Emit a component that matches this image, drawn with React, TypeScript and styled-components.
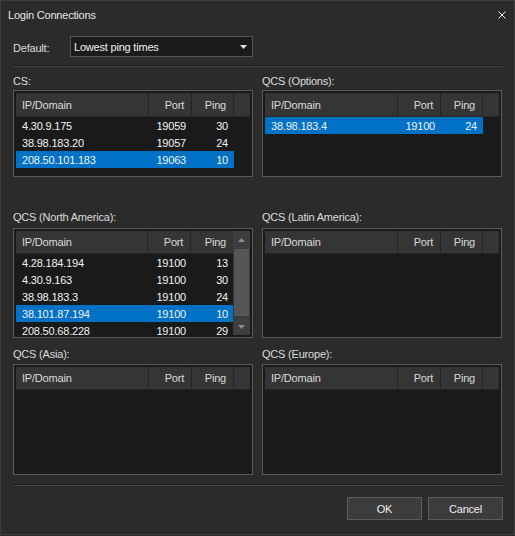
import styled, { createGlobalStyle } from "styled-components";

const GlobalStyle = createGlobalStyle`
  html, body {
    margin: 0;
    padding: 0;
    background: #2b2b2b;
  }
  body {
    font-family: "Liberation Sans", Arial, sans-serif;
    font-size: 11px;
    letter-spacing: -0.2px;
  }
`;

const Window = styled.div`
  box-sizing: border-box;
  width: 515px;
  height: 535px;
  background: #2b2b2b;
  border: 1px solid #3d3d3d;
  display: flex;
  flex-direction: column;
  color: #f0f0f0;
`;

const TitleBar = styled.div`
  height: 27px;
  padding: 0 7px;
  display: flex;
  align-items: center;
  justify-content: space-between;
`;

const Title = styled.span`
  color: #e6e6e6;
  font-size: 11px;
`;

const CloseButton = styled.div`
  width: 8px;
  height: 8px;
  margin-right: 1px;
  display: flex;
`;

const Body = styled.div`
  padding: 0 11px 0 12px;
  display: flex;
  flex-direction: column;
`;

const DefaultRow = styled.div`
  margin-top: 8px;
  height: 21px;
  display: flex;
  align-items: center;
`;

const FieldLabel = styled.span`
  width: 57px;
  color: #dcdcdc;
  padding-top: 3px;
`;

const Dropdown = styled.div`
  box-sizing: border-box;
  width: 183px;
  height: 21px;
  background: #1b1b1b;
  border: 1px solid #555;
  display: flex;
  align-items: center;
  justify-content: space-between;
  padding: 0 5px 0 3px;
  color: #f0f0f0;
`;

const Separator = styled.div<{ $top: number }>`
  margin-top: ${(p) => p.$top}px;
  height: 0;
  border-top: 1px solid #1e1e1e;
  border-bottom: 1px solid #424242;
`;

const Groups = styled.div<{ $top: number }>`
  margin-top: ${(p) => p.$top}px;
  display: grid;
  grid-template-columns: 240px 240px;
  column-gap: 9px;
`;

const Group = styled.div<{ $top: number }>`
  margin-top: ${(p) => p.$top}px;
  display: flex;
  flex-direction: column;
`;

const GroupLabel = styled.div<{ $gap: number }>`
  height: 13px;
  line-height: 13px;
  color: #dcdcdc;
  margin-bottom: ${(p) => p.$gap}px;
`;

const ListBox = styled.div<{ $height: number }>`
  box-sizing: border-box;
  height: ${(p) => p.$height}px;
  border: 1px solid #5a5a5a;
  background: #1a1a1a;
  padding: 2px;
  display: flex;
  overflow: hidden;
`;

const ListMain = styled.div`
  flex: 1;
  display: flex;
  flex-direction: column;
  min-width: 0;
`;

const HeaderRow = styled.div<{ $h: number }>`
  height: ${(p) => p.$h}px;
  display: flex;
  flex-shrink: 0;
  background: #353535;
  border-bottom: 1px solid #262626;
  box-sizing: border-box;
`;

const HeaderCell = styled.div<{ $w?: number; $align?: string }>`
  box-sizing: border-box;
  ${(p) => (p.$w ? `width: ${p.$w}px;` : "flex: 1;")}
  border-right: 1px solid #242424;
  display: flex;
  align-items: center;
  justify-content: ${(p) => (p.$align === "right" ? "flex-end" : "flex-start")};
  padding: ${(p) => (p.$align === "right" ? "0 7px 0 0" : "0 0 0 6px")};
  color: #dadada;
  &:last-child {
    border-right: none;
  }
`;

const Row = styled.div<{ $selected?: boolean }>`
  height: 17px;
  width: 218px;
  display: flex;
  flex-shrink: 0;
  background: ${(p) => (p.$selected ? "#0071c5" : "transparent")};
  color: #f2f2f2;
`;

const Cell = styled.div<{ $w: number; $align?: string }>`
  box-sizing: border-box;
  width: ${(p) => p.$w}px;
  display: flex;
  align-items: center;
  justify-content: ${(p) => (p.$align === "right" ? "flex-end" : "flex-start")};
  padding: ${(p) => (p.$align === "right" ? "0 6px 0 0" : "0 0 0 6px")};
`;

const ScrollBar = styled.div`
  width: 17px;
  flex-shrink: 0;
  background: #3a3a3a;
  display: flex;
  flex-direction: column;
`;

const ScrollArrow = styled.div`
  height: 17px;
  background: #3e3e3e;
  display: flex;
  align-items: center;
  justify-content: center;
`;

const ScrollTrack = styled.div`
  flex: 1;
  padding: 1px 1px;
  display: flex;
  flex-direction: column;
`;

const ScrollThumb = styled.div`
  height: 67px;
  background: #565656;
`;

const ButtonRow = styled.div`
  margin-top: 11px;
  display: flex;
  justify-content: flex-end;
  gap: 6px;
`;

const Button = styled.button`
  box-sizing: border-box;
  width: 75px;
  height: 23px;
  background: #3c3c3c;
  border: 1px solid #5c5c5c;
  color: #f0f0f0;
  font-family: "Liberation Sans", Arial, sans-serif;
  font-size: 11px;
  letter-spacing: -0.2px;
  padding: 0;
`;

type Entry = { ip: string; port: string; ping: string; selected?: boolean };

const Arrow = ({ up, color }: { up?: boolean; color: string }) => (
  <svg width="7" height="4" viewBox="0 0 7 4">
    <polygon points={up ? "0,4 7,4 3.5,0" : "0,0 7,0 3.5,4"} fill={color} />
  </svg>
);

function ConnectionList({
  height,
  rows,
  scroll,
  headerHeight = 23,
}: {
  height: number;
  rows: Entry[];
  scroll?: boolean;
  headerHeight?: number;
}) {
  return (
    <ListBox $height={height}>
      <ListMain>
        <HeaderRow $h={headerHeight}>
          <HeaderCell $w={133}>IP/Domain</HeaderCell>
          <HeaderCell $w={43} $align="right">
            Port
          </HeaderCell>
          <HeaderCell $w={42} $align="right">
            Ping
          </HeaderCell>
          {!scroll && <HeaderCell />}
        </HeaderRow>
        {rows.map((r) => (
          <Row key={r.ip} $selected={r.selected}>
            <Cell $w={133}>{r.ip}</Cell>
            <Cell $w={43} $align="right">
              {r.port}
            </Cell>
            <Cell $w={42} $align="right">
              {r.ping}
            </Cell>
          </Row>
        ))}
      </ListMain>
      {scroll && (
        <ScrollBar>
          <ScrollArrow>
            <Arrow up color="#8c8c8c" />
          </ScrollArrow>
          <ScrollTrack>
            <ScrollThumb />
          </ScrollTrack>
          <ScrollArrow>
            <Arrow color="#8c8c8c" />
          </ScrollArrow>
        </ScrollBar>
      )}
    </ListBox>
  );
}

const cs: Entry[] = [
  { ip: "4.30.9.175", port: "19059", ping: "30" },
  { ip: "38.98.183.20", port: "19057", ping: "24" },
  { ip: "208.50.101.183", port: "19063", ping: "10", selected: true },
];

const options: Entry[] = [{ ip: "38.98.183.4", port: "19100", ping: "24", selected: true }];

const northAmerica: Entry[] = [
  { ip: "4.28.184.194", port: "19100", ping: "13" },
  { ip: "4.30.9.163", port: "19100", ping: "30" },
  { ip: "38.98.183.3", port: "19100", ping: "24" },
  { ip: "38.101.87.194", port: "19100", ping: "10", selected: true },
  { ip: "208.50.68.228", port: "19100", ping: "29" },
];

export default function App() {
  return (
    <>
      <GlobalStyle />
      <Window>
        <TitleBar>
          <Title>Login Connections</Title>
          <CloseButton>
            <svg width="8" height="8" viewBox="0 0 8 8">
              <path d="M0.5 0.5 L7.5 7.5 M7.5 0.5 L0.5 7.5" stroke="#f0f0f0" strokeWidth="1" />
            </svg>
          </CloseButton>
        </TitleBar>
        <Body>
          <DefaultRow>
            <FieldLabel>Default:</FieldLabel>
            <Dropdown>
              <span>Lowest ping times</span>
              <Arrow color="#e0e0e0" />
            </Dropdown>
          </DefaultRow>
          <Separator $top={8} />
          <Groups $top={8}>
            <Group $top={0}>
              <GroupLabel $gap={2}>CS:</GroupLabel>
              <ConnectionList height={87} rows={cs} headerHeight={24} />
            </Group>
            <Group $top={0}>
              <GroupLabel $gap={2}>QCS (Options):</GroupLabel>
              <ConnectionList height={87} rows={options} headerHeight={24} />
            </Group>
            <Group $top={34}>
              <GroupLabel $gap={4}>QCS (North America):</GroupLabel>
              <ConnectionList height={110} rows={northAmerica} scroll />
            </Group>
            <Group $top={34}>
              <GroupLabel $gap={4}>QCS (Latin America):</GroupLabel>
              <ConnectionList height={110} rows={[]} />
            </Group>
            <Group $top={10}>
              <GroupLabel $gap={3}>QCS (Asia):</GroupLabel>
              <ConnectionList height={111} rows={[]} />
            </Group>
            <Group $top={10}>
              <GroupLabel $gap={3}>QCS (Europe):</GroupLabel>
              <ConnectionList height={111} rows={[]} />
            </Group>
          </Groups>
          <Separator $top={9} />
          <ButtonRow>
            <Button>OK</Button>
            <Button>Cancel</Button>
          </ButtonRow>
        </Body>
      </Window>
    </>
  );
}
